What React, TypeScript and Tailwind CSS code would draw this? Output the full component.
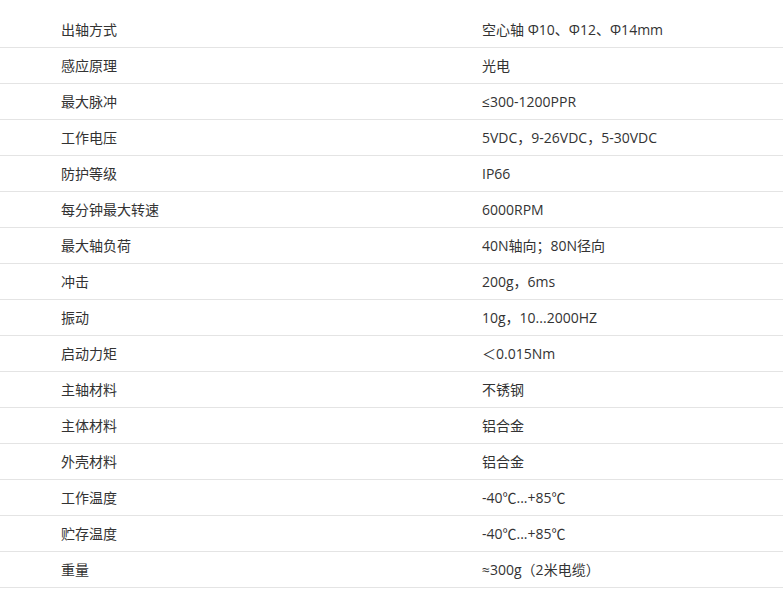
const specs: [string, string][] = [
  ["出轴方式", "空心轴 Φ10、Φ12、Φ14mm"],
  ["感应原理", "光电"],
  ["最大脉冲", "≤300-1200PPR"],
  ["工作电压", "5VDC，9-26VDC，5-30VDC"],
  ["防护等级", "IP66"],
  ["每分钟最大转速", "6000RPM"],
  ["最大轴负荷", "40N轴向；80N径向"],
  ["冲击", "200g，6ms"],
  ["振动", "10g，10...2000HZ"],
  ["启动力矩", "＜0.015Nm"],
  ["主轴材料", "不锈钢"],
  ["主体材料", "铝合金"],
  ["外壳材料", "铝合金"],
  ["工作温度", "-40℃...+85℃"],
  ["贮存温度", "-40℃...+85℃"],
  ["重量", "≈300g（2米电缆）"],
]

export default function App() {
  return (
    <div
      className="min-h-screen bg-white pt-[12px] text-[14px] text-[#333]"
      style={{ fontFamily: '"Open Sans", "Noto Sans CJK SC", sans-serif' }}
    >
      {specs.map(([k, v]) => (
        <div key={k} className="grid h-[36px] grid-cols-[482px_1fr] items-center border-b border-[#e4e4e4]">
          <div className="pl-[61px]">{k}</div>
          <div>{v}</div>
        </div>
      ))}
    </div>
  )
}
